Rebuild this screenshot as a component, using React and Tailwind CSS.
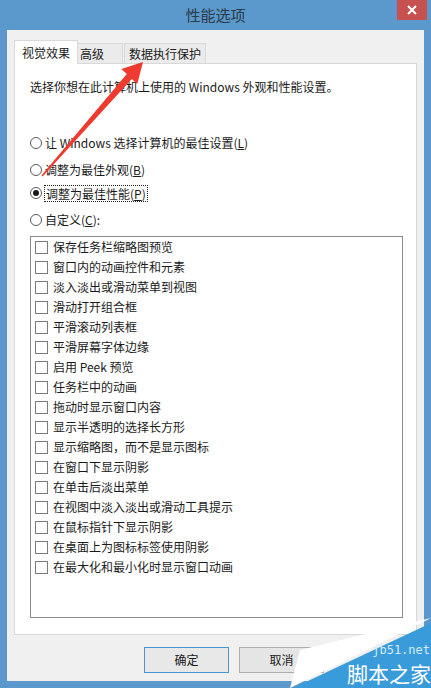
import React from 'react'

const effects = [
  '保存任务栏缩略图预览',
  '窗口内的动画控件和元素',
  '淡入淡出或滑动菜单到视图',
  '滑动打开组合框',
  '平滑滚动列表框',
  '平滑屏幕字体边缘',
  '启用 Peek 预览',
  '任务栏中的动画',
  '拖动时显示窗口内容',
  '显示半透明的选择长方形',
  '显示缩略图，而不是显示图标',
  '在窗口下显示阴影',
  '在单击后淡出菜单',
  '在视图中淡入淡出或滑动工具提示',
  '在鼠标指针下显示阴影',
  '在桌面上为图标标签使用阴影',
  '在最大化和最小化时显示窗口动画',
]

function Radio({ checked }) {
  return (
    <span className="w-[12px] h-[12px] rounded-full border border-[#5a5a5a] bg-white flex items-center justify-center shrink-0">
      {checked && <span className="w-[6px] h-[6px] rounded-full bg-[#1a1a1a]" />}
    </span>
  )
}

function Checkbox() {
  return <span className="w-[13px] h-[13px] border border-[#7a7a7a] bg-white shrink-0" />
}

export default function App() {
  return (
    <div className="relative w-[431px] h-[688px] overflow-hidden bg-[#5b98cc] flex flex-col font-['Noto_Sans_CJK_SC',sans-serif] text-[12px] text-[#1a1a1a]">
      {/* title bar */}
      <div className="h-[30px] grid grid-cols-[1fr_auto_1fr] items-center">
        <div />
        <div className="text-[15px] leading-[20px] text-[#2b3a48]">性能选项</div>
        <div className="flex justify-end self-start pr-[4px]">
          <div className="w-[30px] h-[20px] bg-[#c75050] flex items-center justify-center">
            <svg width="10" height="10" viewBox="0 0 10 10">
              <path d="M1 1 L9 9 M9 1 L1 9" stroke="#fff" strokeWidth="2" />
            </svg>
          </div>
        </div>
      </div>

      {/* client area */}
      <div className="mx-[7px] h-[651px] bg-[#f0f0f0] flex flex-col px-[7px] pt-[10px]">
        <div className="flex items-end h-[23px]">
          <div className="w-[64px] h-[24px] bg-white border border-b-0 border-[#d9d9d9] -mb-px relative z-10 flex items-center justify-center leading-[16px]">
            视觉效果
          </div>
          <div className="w-[45px] h-[20px] bg-[#ebebeb] border border-b-0 border-l-0 border-[#d9d9d9] flex items-center pl-[2px] leading-[16px]">
            高级
          </div>
          <div className="w-[82px] h-[20px] ml-px bg-[#ebebeb] border border-b-0 border-[#d9d9d9] flex items-center justify-center leading-[16px]">
            数据执行保护
          </div>
        </div>

        <div className="h-[572px] w-[403px] bg-white border border-[#d9d9d9] flex flex-col pl-[15px]">
          <div className="mt-[15px] leading-[16px]">选择你想在此计算机上使用的 Windows 外观和性能设置。</div>

          <div className="mt-[39px] h-[18px] flex items-center gap-[3px] leading-[16px]">
            <Radio />
            <span>让 Windows 选择计算机的最佳设置(<u>L</u>)</span>
          </div>
          <div className="mt-[9px] h-[18px] flex items-center gap-[3px] leading-[16px]">
            <Radio />
            <span>调整为最佳外观(<u>B</u>)</span>
          </div>
          <div className="mt-[5px] h-[18px] flex items-center gap-[2px] leading-[15px]">
            <Radio checked />
            <span className="border border-dotted border-[#222] px-[1px]">调整为最佳性能(<u>P</u>)</span>
          </div>
          <div className="mt-[9px] h-[18px] flex items-center gap-[3px] leading-[16px]">
            <Radio />
            <span>自定义(<u>C</u>):</span>
          </div>

          <div className="mt-[7px] w-[373px] h-[382px] border border-[#8c8c8c] flex flex-col pl-[4px]">
            {effects.map(t => (
              <div key={t} className="h-[20px] flex items-center gap-[5px] leading-[16px] shrink-0">
                <Checkbox />
                <span>{t}</span>
              </div>
            ))}
          </div>
        </div>

        <div className="mt-[12px] flex gap-[10px] pl-[130px]">
          <div className="w-[85px] h-[26px] border border-[#4a95d2] bg-[#e8e8e8] flex items-center justify-center leading-[16px]">确定</div>
          <div className="w-[85px] h-[26px] border border-[#adadad] bg-[#e5e5e5] flex items-center justify-center leading-[16px]">取消</div>
        </div>
      </div>

      {/* red arrow annotation */}
      <svg className="absolute inset-0 pointer-events-none" width="431" height="688" viewBox="0 0 431 688">
        <polygon
          points="143,62 137.3,84.1 131.8,78.9 42.6,176.5 41.4,175.5 126.8,74.1 121.3,68.9"
          fill="#ee3a2f"
        />
      </svg>

      {/* watermark */}
      <div className="absolute right-0 bottom-0 w-[141px] h-[70px]">
        <svg className="absolute inset-0" width="141" height="70" viewBox="0 0 141 70">
          <polygon points="10,32 141,0 0,70" fill="#ffffff" />
          <polygon points="3,70 141,5 141,70" fill="#3a9bda" />
        </svg>
        <div className="absolute right-[1px] top-[26px] font-['DejaVu_Sans_Mono',monospace] text-[12px] leading-[12px] text-[#d6ecfa]">jb51.net</div>
        <div className="absolute right-0 top-[45px] text-[21px] leading-[21px] text-white">脚本之家</div>
      </div>
    </div>
  )
}
